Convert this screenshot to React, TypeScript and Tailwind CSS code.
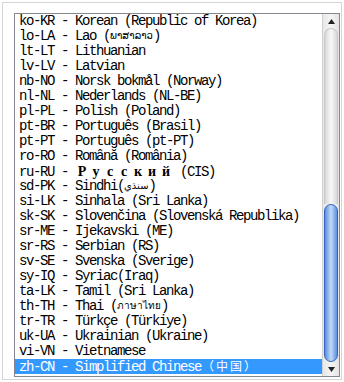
import React from "react";

const mono = {
  fontFamily: '"Liberation Mono", "Noto Sans CJK SC", monospace',
};

function Wide({ text, bold, cjk }: { text: string; bold?: boolean; cjk?: boolean }) {
  return (
    <>
      {Array.from(text).map((c, i) => (
        <span
          key={i}
          className={`inline-block w-[14px] text-center tracking-normal ${cjk ? "text-[12px]" : "text-[14px]"} ${bold ? "font-bold" : ""}`}
          style={{
            fontFamily: cjk
              ? '"Noto Sans CJK SC", sans-serif'
              : '"Liberation Serif", serif',
          }}
        >
          {c}
        </span>
      ))}
    </>
  );
}

function Script({ text }: { text: string }) {
  return (
    <span
      className="inline-block h-[14px] leading-[14px] align-middle text-[10px] tracking-normal"
      style={{ fontFamily: '"DejaVu Sans", sans-serif' }}
    >
      {text}
    </span>
  );
}

const rows: React.ReactNode[] = [
  "ko-KR - Korean (Republic of Korea)",
  <>
    lo-LA - Lao (<Script text="ພາສາລາວ" />)
  </>,
  "lt-LT - Lithuanian",
  "lv-LV - Latvian",
  "nb-NO - Norsk bokmål (Norway)",
  "nl-NL - Nederlands (NL-BE)",
  "pl-PL - Polish (Poland)",
  "pt-BR - Português (Brasil)",
  "pt-PT - Português (pt-PT)",
  "ro-RO - Română (România)",
  <>
    ru-RU - <Wide text="Русский" bold /> (CIS)
  </>,
  <>
    sd-PK - Sindhi(<Script text="سنڌي" />)
  </>,
  "si-LK - Sinhala (Sri Lanka)",
  "sk-SK - Slovenčina (Slovenská Republika)",
  "sr-ME - Ijekavski (ME)",
  "sr-RS - Serbian (RS)",
  "sv-SE - Svenska (Sverige)",
  "sy-IQ - Syriac(Iraq)",
  "ta-LK - Tamil (Sri Lanka)",
  <>
    th-TH - Thai (<Script text="ภาษาไทย" />)
  </>,
  "tr-TR - Türkçe (Türkiye)",
  "uk-UA - Ukrainian (Ukraine)",
  "vi-VN - Vietnamese",
  <>
    zh-CN - Simplified Chinese<Wide text="（中国）" cjk />
  </>,
];

export default function App() {
  return (
    <div className="w-[344px] h-[382px] bg-white p-[2px]">
      <div className="w-full h-full border border-[#d5d5d5] pl-[11px] pt-[10px] pr-[1px] pb-[2px]">
        <div className="w-full h-full border border-[#828790] flex bg-white">
          <div className="flex-1 flex flex-col overflow-hidden" style={mono}>
            {rows.map((r, i) => {
              const sel = i === rows.length - 1;
              return (
                <div
                  key={i}
                  className={`h-[15px] shrink-0 flex items-center pl-[4px] whitespace-pre text-[14px] leading-[15px] tracking-[-1.4px] ${
                    sel ? "bg-[#3399ff] text-white" : "text-black"
                  }`}
                >
                  <span>{r}</span>
                </div>
              );
            })}
          </div>
          <div className="w-[17px] flex flex-col bg-gradient-to-r from-[#e8e8e8] via-[#f4f4f4] to-[#e4e4e4] border-l border-[#d0d0d0]">
            <div className="h-[14px] flex items-center justify-center">
              <svg width="7" height="5" viewBox="0 0 7 5">
                <path d="M3.5 0 L7 5 L0 5 Z" fill="#222" />
              </svg>
            </div>
            <div className="flex-1 flex flex-col px-[1px]">
              <div className="flex-1 rounded-t-[7px] border-x border-t border-[#c8c8c8] bg-gradient-to-r from-[#d8d8d8] via-[#f8f8f8] to-[#d8d8d8]" />
              <div className="h-[158px] rounded-[7px] border border-[#3a62b8] bg-gradient-to-r from-[#5b8de0] via-[#c3dcf8] to-[#5b8de0]" />
            </div>
            <div className="h-[14px] flex items-center justify-center">
              <svg width="7" height="5" viewBox="0 0 7 5">
                <path d="M0 0 L7 0 L3.5 5 Z" fill="#222" />
              </svg>
            </div>
          </div>
        </div>
      </div>
    </div>
  );
}
